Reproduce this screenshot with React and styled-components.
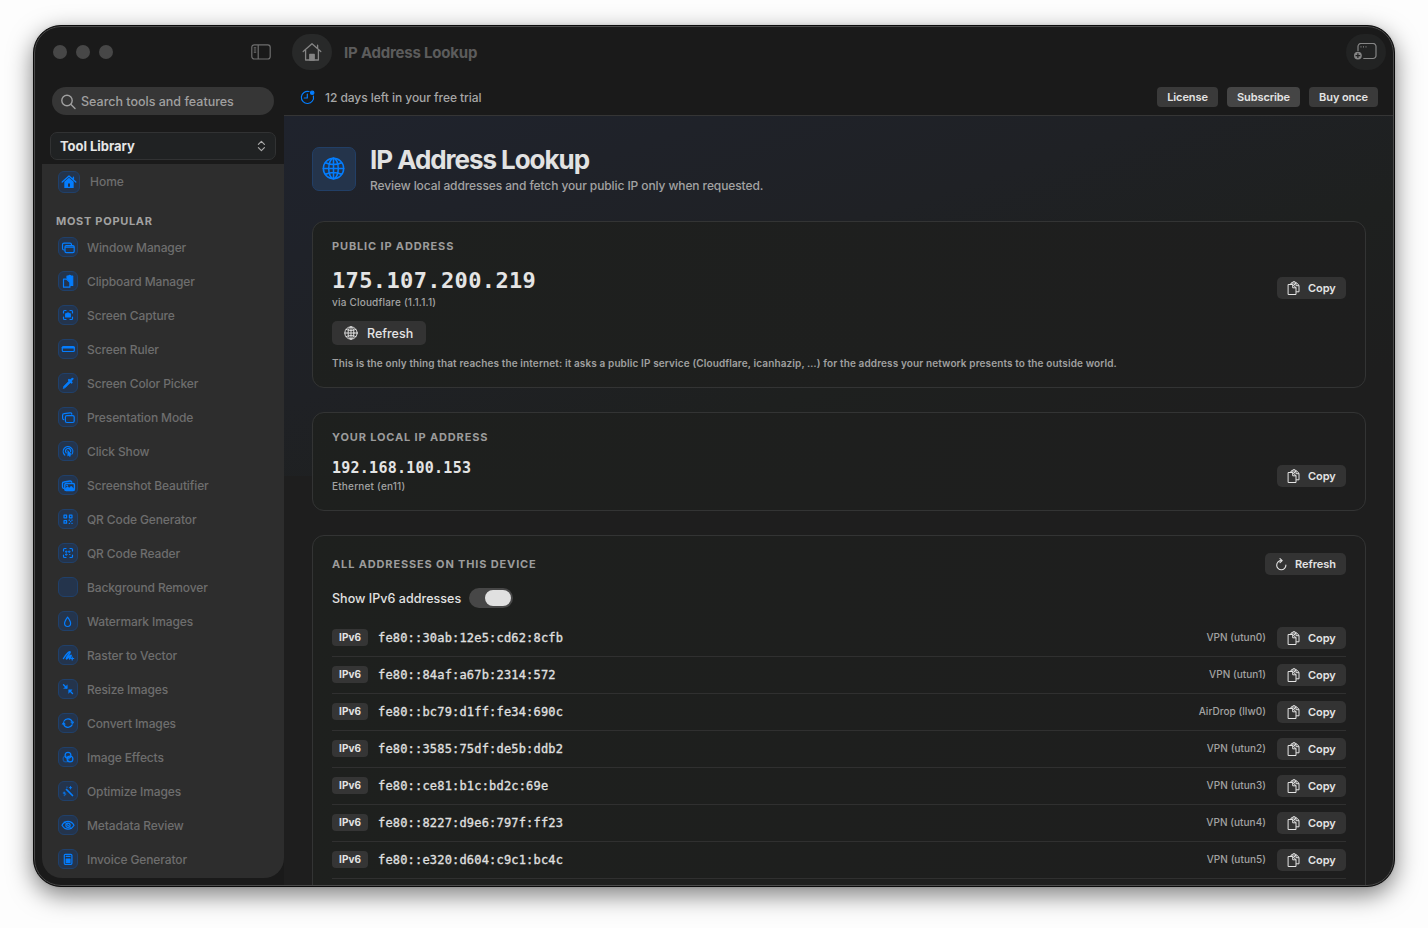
import React from 'react';
import styled, { createGlobalStyle } from 'styled-components';

const GlobalStyle = createGlobalStyle`
	body {
		margin: 0;
		background: #fdfdfd;
		font-family: Inter, "Liberation Sans", sans-serif;
		-webkit-font-smoothing: antialiased;
		overflow: hidden;
	}
	* {
		box-sizing: border-box;
	}
	button {
		font-family: inherit;
		border: 0;
		padding: 0;
	}
`;

const Desktop = styled.div`
	height: 928px;
	padding: 25px 33px 41px;
`;

const AppWindow = styled.div`
	position: relative;
	display: flex;
	height: 862px;
	border: 1px solid #0b0b0b;
	border-radius: 28px;
	background: #1a1a1a;
	overflow: hidden;
	box-shadow: 0 8px 24px rgba(0, 0, 0, 0.5), 0 0 3px rgba(0, 0, 0, 0.12);

	&::after {
		content: '';
		position: absolute;
		inset: 0;
		border: 1px solid #4b4b4b;
		border-radius: 27px;
		pointer-events: none;
	}
`;

/* ---------- sidebar ---------- */

const Sidebar = styled.aside`
	width: 250px;
	flex: none;
	padding: 0 0 8px 8px;
	display: flex;
	flex-direction: column;
`;

const SidebarTop = styled.div`
	height: 52px;
	padding: 0 13px 0 11px;
	display: flex;
	align-items: center;
	gap: 9px;

	svg {
		margin-left: auto;
	}
`;

const Light = styled.i`
	width: 14px;
	height: 14px;
	border-radius: 50%;
	background: #474747;
`;

const SearchField = styled.div`
	height: 28px;
	margin: 9px 10px 0;
	padding: 0 8px;
	display: flex;
	align-items: center;
	gap: 4px;
	border-radius: 14px;
	background: #363636;
	color: #a0a0a0;
	font-size: 12.5px;
	font-weight: 500;
	letter-spacing: 0;
	white-space: nowrap;
`;

const LibrarySelect = styled.div`
	height: 28px;
	margin: 17px 8px 4px;
	padding: 0 8px 0 9px;
	display: flex;
	align-items: center;
	justify-content: space-between;
	border: 1px solid #313233;
	border-radius: 7px;
	background: #202223;
	color: #e6e6e6;
	font-size: 13px;
	font-weight: 700;
	letter-spacing: -0.05px;
`;

const ToolList = styled.nav`
	flex: 1;
	padding-top: 4px;
	background: #2d2d2d;
	border-radius: 0 0 20px 20px;
	overflow: hidden;
`;

const ToolRow = styled.div`
	height: ${(p) => (p.$home ? 27 : 34)}px;
	padding-left: 16px;
	display: flex;
	align-items: center;
	gap: ${(p) => (p.$home ? 10 : 9)}px;
	color: #6e6e6e;
	font-size: 12px;
	font-weight: 500;
	letter-spacing: ${(p) => (p.$home ? 0 : -0.12)}px;
	white-space: nowrap;
`;

const ToolTile = styled.span`
	width: ${(p) => p.$size || 20}px;
	height: ${(p) => p.$size || 20}px;
	flex: none;
	border: 1px solid #20406a;
	border-radius: 6px;
	background: #24344c;
	color: #047dfe;

	svg {
		display: block;
		margin: -1px;
	}
`;

const ListHeading = styled.div`
	height: 14px;
	margin: 19px 0 2px 14px;
	line-height: 14px;
	font-size: 11px;
	font-weight: 700;
	letter-spacing: 0.7px;
	color: #a2a2a2;
`;

/* ---------- main column ---------- */

const Main = styled.main`
	flex: 1;
	min-width: 0;
	display: flex;
	flex-direction: column;
`;

const TitleBar = styled.header`
	height: 53px;
	flex: none;
	padding: 0 8px 1px;
	display: flex;
	align-items: center;
	gap: 12px;
	color: #5c5c5c;
	font-size: 15px;
	font-weight: 700;
	letter-spacing: -0.2px;
`;

const RoundButton = styled.button`
	width: 40px;
	height: 36px;
	margin-left: ${(p) => (p.$end ? 'auto' : '0')};
	display: grid;
	place-items: center;
	border-radius: 18px;
	background: ${(p) => (p.$end ? '#222323' : '#282929')};
	color: #858585;
`;

const TrialBar = styled.div`
	height: 37px;
	flex: none;
	padding: 0 16px 0 16px;
	display: flex;
	align-items: center;
	gap: 9px;
	border-bottom: 1px solid #353535;
	color: #a6a6a6;
	font-size: 12px;
	font-weight: 500;
	letter-spacing: -0.05px;
`;

const TrialText = styled.span`
	margin: 0 auto 0 1px;
`;

const SmallButton = styled.button`
	height: 20px;
	width: ${(p) => p.$width}px;
	border-radius: 4px;
	background: ${(p) => (p.$bright ? '#454545' : '#3a3a3a')};
	color: #e4e4e4;
	font-size: 11px;
	font-weight: 600;
	letter-spacing: -0.1px;
`;

const Content = styled.section`
	flex: 1;
	min-height: 0;
	padding: 31px 28px 0;
	background: linear-gradient(to bottom right, #1f232d 0%, #1f2125 40%, #1e201f 62%, #1e1e1e 85%) 0 0 / 100% 360px no-repeat #1e1e1e;
	overflow: hidden;
`;

const Hero = styled.div`
	height: 44px;
	margin-bottom: 30px;
	display: flex;
	gap: 14px;
`;

const HeroIcon = styled.div`
	width: 44px;
	height: 44px;
	padding: 0 1px 1px 0;
	display: grid;
	place-items: center;
	border: 1px solid #223f66;
	border-radius: 7px;
	background: #24344b;
	color: #047dfe;
`;

const HeroTitle = styled.h1`
	margin: -3px 0 2px;
	line-height: 32px;
	font-size: 26px;
	font-weight: 700;
	letter-spacing: -1.05px;
	color: #e2e2e2;
`;

const HeroText = styled.p`
	margin: 0;
	line-height: 16px;
	font-size: 12px;
	font-weight: 500;
	letter-spacing: -0.1px;
	color: #a3a3a3;
`;

const Card = styled.div`
	height: ${(p) => p.$height}px;
	margin-bottom: 24px;
	padding: 17px 19px 0;
	border: 1px solid #333434;
	border-radius: 12px;
	background: linear-gradient(to right, rgba(30, 32, 30, 0.96), rgba(30, 30, 30, 0.96));
`;

const CardTitle = styled.h2`
	margin: 0;
	line-height: 14px;
	font-size: 11px;
	font-weight: 700;
	letter-spacing: 0.85px;
	color: #9c9c9c;
`;

const AddressRow = styled.div`
	margin-top: ${(p) => p.$top}px;
	display: flex;
	align-items: center;
	justify-content: space-between;
`;

const Address = styled.div`
	line-height: ${(p) => (p.$large ? 30 : 20)}px;
	margin-bottom: ${(p) => (p.$large ? -1 : 1)}px;
	font-family: "DejaVu Sans Mono", "Liberation Mono", monospace;
	font-size: ${(p) => (p.$large ? 22 : 15)}px;
	font-weight: 700;
	letter-spacing: ${(p) => (p.$large ? 0.37 : 0.25)}px;
	color: #e4e4e4;
`;

const Via = styled.div`
	line-height: 14px;
	font-size: 10px;
	font-weight: 500;
	letter-spacing: 0.2px;
	color: #a3a3a3;
`;

const Note = styled.p`
	margin: 11px 0 0;
	line-height: 14px;
	font-size: 10px;
	font-weight: 600;
	letter-spacing: 0.12px;
	color: #a0a0a0;
	white-space: nowrap;
`;

const ActionButton = styled.button`
	width: ${(p) => p.$width || 69}px;
	height: 22px;
	display: flex;
	align-items: center;
	gap: ${(p) => p.$gap || 7}px;
	padding-left: 10px;
	border-radius: 5px;
	background: #333;
	color: #e4e4e4;
	font-size: 11px;
	font-weight: 600;
	letter-spacing: -0.05px;
`;

const FetchButton = styled(ActionButton)`
	height: 24px;
	margin-top: 12px;
	padding-left: 12px;
	font-size: 12.5px;
	font-weight: 500;
	letter-spacing: 0;
`;

const CardHead = styled.div`
	height: 22px;
	display: flex;
	align-items: center;
	justify-content: space-between;
`;

const ToggleRow = styled.div`
	height: 20px;
	margin: 13px 0 12px;
	display: flex;
	align-items: center;
	gap: 8px;
	font-size: 12.5px;
	font-weight: 500;
	letter-spacing: 0.04px;
	color: #e2e2e2;
`;

const Toggle = styled.span`
	width: 44px;
	height: 20px;
	padding: 2px;
	display: flex;
	justify-content: flex-end;
	border-radius: 10px;
	background: #474747;

	i {
		width: 26px;
		height: 16px;
		border-radius: 8px;
		background: #e0e0e0;
	}
`;

const DeviceRow = styled.div`
	height: 37px;
	display: flex;
	align-items: center;
	border-bottom: 1px solid #303030;
`;

const Badge = styled.span`
	width: 36px;
	height: 17px;
	margin: 0 10px 2px 0;
	line-height: 17px;
	text-align: center;
	border-radius: 4px;
	background: #353535;
	color: #e4e4e4;
	font-size: 10px;
	font-weight: 700;
`;

const DeviceAddress = styled.span`
	margin-right: auto;
	font-family: "DejaVu Sans Mono", "Liberation Mono", monospace;
	font-size: 12px;
	letter-spacing: 0.18px;
	color: #e0e0e0;
	-webkit-text-stroke: 0.3px #e0e0e0;
`;

const DeviceName = styled.span`
	margin: 0 11px 2px 0;
	font-size: 10px;
	font-weight: 500;
	letter-spacing: 0.05px;
	color: #a3a3a3;
`;

/* ---------- icons ---------- */

const Svg = ({ size = 20, box = 20, width = 1.2, children, ...rest }) => (
	<svg
		width={size}
		height={size}
		viewBox={`0 0 ${box} ${box}`}
		fill="none"
		stroke="currentColor"
		strokeWidth={width}
		strokeLinecap="round"
		strokeLinejoin="round"
		{...rest}
	>
		{children}
	</svg>
);

const GlobeIcon = ({ size, width }) => (
	<Svg size={size} box={24} width={width}>
		<circle cx="12" cy="12" r="10.6" />
		<ellipse cx="12" cy="12" rx="5" ry="10.6" />
		<path d="M12 1.4v21.2M1.4 12h21.2M3.6 6c5 2.2 11.8 2.2 16.8 0M3.6 18c5-2.2 11.8-2.2 16.8 0" />
	</Svg>
);

const CopyIcon = () => (
	<Svg size={14} box={14} width={1}>
		<path d="M1.5 3.5h4.300l3.200 3.200v6.800H1.500z" />
		<path d="M5.700 3.700v3.100H9" />
		<path d="M4 3.300V2h1.200C5.300 1 6 .5 7 .5s1.700.5 1.900 1.500h.8l2.300 2.300v6.500H9.500M5.300 2h3.400M7 4l2-1.800v2.500h2.600" />
	</Svg>
);

const ReloadIcon = () => (
	<Svg size={13} box={13} width={1.1}>
		<path d="M6.4 2.600a4.600 4.600 0 1 0 4.500 4.500" />
		<path d="M5 .6l2.200 2-2.200 2" />
	</Svg>
);

const HomeIcon = () => (
	<Svg size={20} box={20} width={1.3}>
		<path d="M1.200 9.600L10 1.800l8.800 7.800M3.600 8v10h12.800V8M15.600 6.400V3.200" />
		<path d="M7.800 18v-5.500h4.400V18z" fill="currentColor" />
	</Svg>
);

const TrialIcon = () => (
	<Svg size={15} box={15} width={1.2} color="#047dfe">
		<path d="M9 1.500A6.100 6.100 0 1 0 13.400 6" />
		<path d="M7.300 4v4H4.200" />
		<circle cx="12.200" cy="2.700" r="1.700" fill="currentColor" />
	</Svg>
);

const NewWindowIcon = () => (
	<svg width="24" height="18" viewBox="0 0 24 18" fill="none" stroke="currentColor" strokeWidth="1.2">
		<path d="M4 8V3.500a3 3 0 0 1 3-3h12a3 3 0 0 1 3 3v9a3 3 0 0 1-3 3H9.300" />
		<path d="M6.500 3.900h1M9 3.900h1M11.500 3.900h1" />
		<circle cx="3.900" cy="12.600" r="3.900" fill="#858585" stroke="none" />
		<path d="M3.900 10.200v4.800M1.500 12.600h4.800" stroke="#222" />
	</svg>
);

const PanelIcon = () => (
	<svg width="20" height="16" viewBox="0 0 20 16" fill="none" stroke="#6e6e6e" strokeWidth="1.2">
		<rect x="0.8" y="0.8" width="18.4" height="14.2" rx="2.5" />
		<path d="M7.200 1v14M2.800 3.800h2.400M2.800 6h2.400M2.800 8.200h2.400" />
	</svg>
);

const SearchIcon = () => (
	<Svg size={17} box={17} width={1.4}>
		<circle cx="7" cy="7.5" r="5.2" />
		<path d="M11 11.500l4 4" />
	</Svg>
);

const ChevronsIcon = () => (
	<Svg size={12} box={12} width={1.2} color="#a8a8a8">
		<path d="M3.400 4.300L6.400 1.300l3 3M3.400 7.700l3 3 3-3" />
	</Svg>
);

const corners = 'M5.500 8V6.500a1 1 0 0 1 1-1H8M12 5.500h1.500a1 1 0 0 1 1 1V8M14.500 12v1.500a1 1 0 0 1-1 1H12M8 14.500H6.500a1 1 0 0 1-1-1V12';

const glyphs = {
	window: (
		<>
			<path d="M6.500 13H6a1.500 1.500 0 0 1-1.500-1.500V7.700A1.500 1.500 0 0 1 6 6.200h6a1.500 1.500 0 0 1 1.500 1.500" />
			<rect x="7" y="8.6" width="9.2" height="7" rx="1.3" />
			<path d="M7.500 10.200h8.300" />
		</>
	),
	clipboard: (
		<>
			<path d="M9 5h1.500a1.500 1.500 0 0 1 2.400 0h1.800v9.500h-3V9.800L9 7z" fill="currentColor" />
			<path d="M5.500 8.200h3.200l3.200 3v5H5.500z" fill="#24344c" />
		</>
	),
	capture: (
		<>
			<path d={corners} />
			<path d="M7.700 8.800h1l.6-.8h1.400l.6.8h1v3.200H7.700z" fill="currentColor" />
		</>
	),
	ruler: (
		<>
			<rect x="4.3" y="7.7" width="12" height="4.8" rx="1" />
			<path d="M4.500 8.600h11.600" strokeWidth="1.8" />
		</>
	),
	picker: (
		<>
			<path d="M5.300 15.200l.6-2 5.200-5.200 1.400 1.400-5.200 5.200z" fill="currentColor" strokeWidth=".7" />
			<path d="M11 7l2.500 2.500M12.300 8l2.200-2.200" strokeWidth="2.2" />
		</>
	),
	present: (
		<>
			<path d="M5.800 12.600A1.500 1.500 0 0 1 4.600 11V8.200a1.500 1.500 0 0 1 1.500-1.500l6-.9a1.500 1.500 0 0 1 1.700 1.300" />
			<rect x="7.4" y="8.6" width="8.8" height="6.9" rx="1.5" />
		</>
	),
	click: (
		<>
			<path d="M6.800 14a4.800 4.800 0 1 1 7.400-1.200M8.200 11.800a2.600 2.600 0 1 1 4.400-1" />
			<path d="M10 9.800l3.300 3.600-1.400.1.500 1.600-.8.300-.6-1.500-1 .8z" fill="currentColor" strokeWidth=".7" />
		</>
	),
	photos: (
		<>
			<path d="M5.600 13.400A1.500 1.500 0 0 1 4.500 12V8.500A1.500 1.500 0 0 1 6 7l6-1a1.500 1.500 0 0 1 1.700 1" strokeWidth="1.4" />
			<rect x="6.800" y="8.500" width="9.600" height="7" rx="1.300" strokeWidth="1.4" />
			<path d="M7 15v-1.200l2.600-2.400 1.700 1.600 1.900-2 3 3v1z" fill="currentColor" strokeWidth=".5" />
			<circle cx="9" cy="10.400" r=".6" fill="currentColor" strokeWidth=".5" />
		</>
	),
	qr: (
		<path d="M6 6.200h2.600v2.600H6zM11.400 6.200H14v2.600h-2.600zM6 11.600h2.600v2.600H6zM11 11.200h.6M13.800 11.200h.4M12.600 12.700h.2M11.200 14.300h.4M13.900 14.300h.3" />
	),
	reader: (
		<>
			<path d={corners} />
			<path d="M8 8.200h1v1H8zM11 8.200h1v1h-1zM8 11h1v1H8zM11.500 11.500h.5" strokeWidth="1" />
		</>
	),
	none: null,
	drop: <path d="M9.600 6.200c-1.600 2.200-3 4.200-3 6.100a3 3.200 0 0 0 6 0c0-1.900-1.400-3.900-3-6.100z" />,
	vector: (
		<>
			<path d="M5.500 13.500c2.500-4.500 6-7.500 6.700-6.600.7.900-4.700 6-3.900 6.900.8.800 4-4.200 4.900-3.500.6.500-1.500 2.200-1.600 3.600" strokeWidth="1.5" />
			<path d="M14.200 12v3M12.700 13.500h3" />
		</>
	),
	resize: (
		<>
			<path d="M5.500 5.800l3 3M14.500 14.500l-3-3" strokeWidth="1.4" />
			<path d="M9.300 6.200v3.300H6zM10.800 10.800h3.300l-3.300 3.300z" fill="currentColor" strokeWidth=".5" />
		</>
	),
	convert: (
		<>
			<path d="M5.900 8.300a4.600 4.600 0 0 1 8.400.6M14.100 11.900a4.600 4.600 0 0 1-8.400-.6" />
			<path d="M4.300 11l1.300-1.900 1.500 1.900zM12.900 9.200l1.500 1.900 1.300-1.900z" fill="currentColor" strokeWidth=".6" />
		</>
	),
	effects: (
		<>
			<circle cx="10" cy="8.300" r="2.900" />
			<circle cx="8" cy="12" r="2.900" opacity=".45" />
			<circle cx="12" cy="12" r="2.900" />
		</>
	),
	wand: (
		<>
			<path d="M8.500 8.500l6 6" strokeWidth="1.7" />
			<path d="M12.500 5.500v2.400M11.300 6.700h2.400M6.200 11v2M5.200 12h2M9 6v.4" strokeWidth=".9" />
			<path d="M6.200 14.600l1.600-1.600" opacity=".6" />
		</>
	),
	eye: (
		<>
			<path d="M4 10.300c1.400-2.500 3.500-3.900 6-3.900s4.600 1.400 6 3.900c-1.400 2.500-3.500 3.900-6 3.900s-4.600-1.400-6-3.900z" />
			<circle cx="10" cy="10.300" r="2.100" />
			<path d="M6.500 6.800l7 7M9.500 10.300h1" strokeWidth=".9" />
		</>
	),
	invoice: (
		<>
			<rect x="6.300" y="5.300" width="7.600" height="10" rx="1" />
			<path d="M8.200 7.400H12" />
			<path d="M8.200 10h3.800v3.500H8.200z" fill="currentColor" />
		</>
	),
	home: (
		<>
			<path d="M4.200 11l6.800-6 6.800 6M15.400 8V6.200" strokeWidth="1.4" />
			<path d="M6.300 10.700L11 6.700l4.700 4v6.300H6.300z" fill="currentColor" stroke="none" />
			<path d="M10 12.600h2v3.200h-2z" fill="#24344c" stroke="none" />
		</>
	),
};

/* ---------- data ---------- */

const tools = [
	['Window Manager', 'window'],
	['Clipboard Manager', 'clipboard'],
	['Screen Capture', 'capture'],
	['Screen Ruler', 'ruler'],
	['Screen Color Picker', 'picker'],
	['Presentation Mode', 'present'],
	['Click Show', 'click'],
	['Screenshot Beautifier', 'photos'],
	['QR Code Generator', 'qr'],
	['QR Code Reader', 'reader'],
	['Background Remover', 'none'],
	['Watermark Images', 'drop'],
	['Raster to Vector', 'vector'],
	['Resize Images', 'resize'],
	['Convert Images', 'convert'],
	['Image Effects', 'effects'],
	['Optimize Images', 'wand'],
	['Metadata Review', 'eye'],
	['Invoice Generator', 'invoice'],
];

const devices = [
	['fe80::30ab:12e5:cd62:8cfb', 'VPN (utun0)'],
	['fe80::84af:a67b:2314:572', 'VPN (utun1)'],
	['fe80::bc79:d1ff:fe34:690c', 'AirDrop (llw0)'],
	['fe80::3585:75df:de5b:ddb2', 'VPN (utun2)'],
	['fe80::ce81:b1c:bd2c:69e', 'VPN (utun3)'],
	['fe80::8227:d9e6:797f:ff23', 'VPN (utun4)'],
	['fe80::e320:d604:c9c1:bc4c', 'VPN (utun5)'],
];

const CopyButton = () => (
	<ActionButton>
		<CopyIcon />
		Copy
	</ActionButton>
);

const SidebarContainer = () => {
	return (
		<Sidebar>
			<SidebarTop>
				<Light />
				<Light />
				<Light />
				<PanelIcon />
			</SidebarTop>
			<SearchField>
				<SearchIcon />
				Search tools and features
			</SearchField>
			<LibrarySelect>
				Tool Library
				<ChevronsIcon />
			</LibrarySelect>
			<ToolList>
				<ToolRow $home>
					<ToolTile $size={22}>
						<Svg size={22} box={22}>{glyphs.home}</Svg>
					</ToolTile>
					Home
				</ToolRow>
				<ListHeading>MOST POPULAR</ListHeading>
				{tools.map(([name, icon]) => (
					<ToolRow key={name}>
						<ToolTile>
							<Svg>{glyphs[icon]}</Svg>
						</ToolTile>
						{name}
					</ToolRow>
				))}
			</ToolList>
		</Sidebar>
	);
};

const AddressCards = () => {
	return (
		<>
			<Card $height={167}>
				<CardTitle>PUBLIC IP ADDRESS</CardTitle>
				<AddressRow $top={13}>
					<div>
						<Address $large>175.107.200.219</Address>
						<Via>via Cloudflare (1.1.1.1)</Via>
					</div>
					<CopyButton />
				</AddressRow>
				<FetchButton $width={94} $gap={9}>
					<GlobeIcon size={14} width={1.6} />
					Refresh
				</FetchButton>
				<Note>
					This is the only thing that reaches the internet: it asks a public IP service (Cloudflare, icanhazip, …) for the address your network presents to the outside world.
				</Note>
			</Card>
			<Card $height={99}>
				<CardTitle>YOUR LOCAL IP ADDRESS</CardTitle>
				<AddressRow $top={14}>
					<div>
						<Address>192.168.100.153</Address>
						<Via>Ethernet (en11)</Via>
					</div>
					<CopyButton />
				</AddressRow>
			</Card>
			<Card $height={420}>
				<CardHead>
					<CardTitle>ALL ADDRESSES ON THIS DEVICE</CardTitle>
					<ActionButton $width={81}>
						<ReloadIcon />
						Refresh
					</ActionButton>
				</CardHead>
				<ToggleRow>
					Show IPv6 addresses
					<Toggle><i /></Toggle>
				</ToggleRow>
				{devices.map(([address, name]) => (
					<DeviceRow key={address}>
						<Badge>IPv6</Badge>
						<DeviceAddress>{address}</DeviceAddress>
						<DeviceName>{name}</DeviceName>
						<CopyButton />
					</DeviceRow>
				))}
			</Card>
		</>
	);
};

const App = () => {
	return (
		<>
			<GlobalStyle />
			<Desktop>
				<AppWindow>
					<SidebarContainer />
					<Main>
						<TitleBar>
							<RoundButton><HomeIcon /></RoundButton>
							IP Address Lookup
							<RoundButton $end><NewWindowIcon /></RoundButton>
						</TitleBar>
						<TrialBar>
							<TrialIcon />
							<TrialText>12 days left in your free trial</TrialText>
							<SmallButton $width={61}>License</SmallButton>
							<SmallButton $width={73} $bright>Subscribe</SmallButton>
							<SmallButton $width={69}>Buy once</SmallButton>
						</TrialBar>
						<Content>
							<Hero>
								<HeroIcon>
									<GlobeIcon size={23} width={1.6} />
								</HeroIcon>
								<div>
									<HeroTitle>IP Address Lookup</HeroTitle>
									<HeroText>Review local addresses and fetch your public IP only when requested.</HeroText>
								</div>
							</Hero>
							<AddressCards />
						</Content>
					</Main>
				</AppWindow>
			</Desktop>
		</>
	);
};

export default App;
